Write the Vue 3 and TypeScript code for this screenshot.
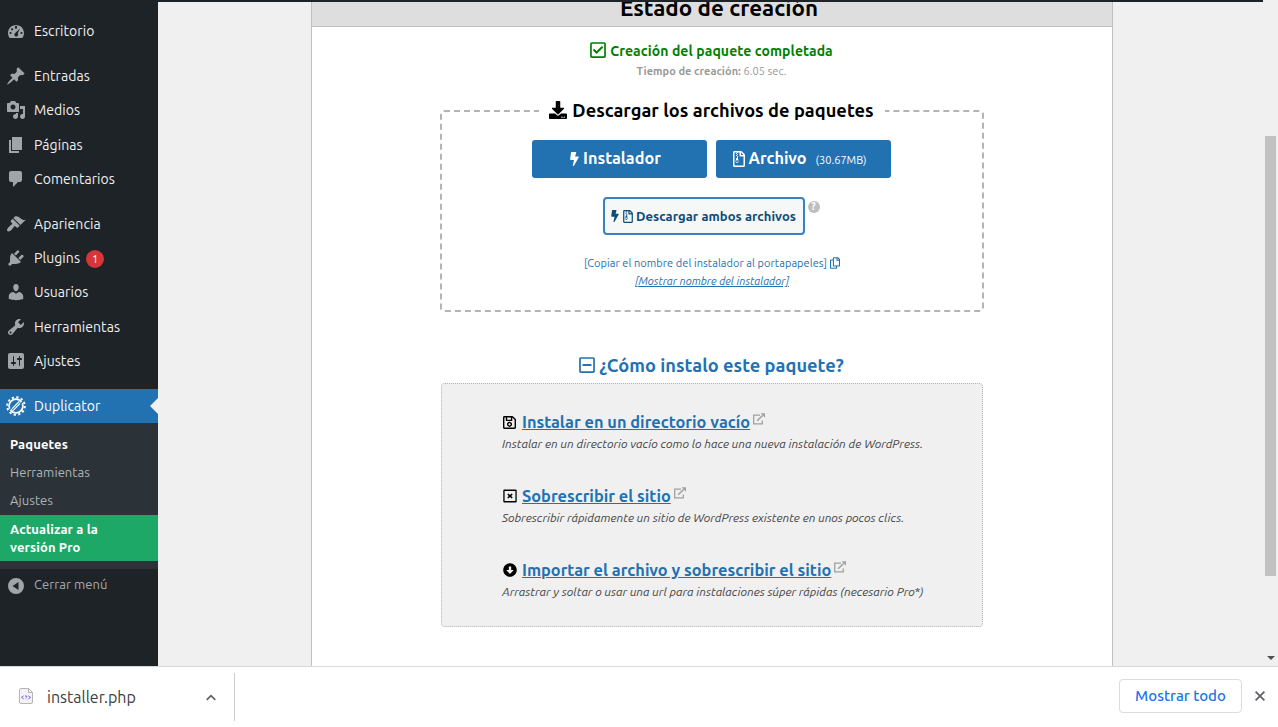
<script setup lang="ts">
interface MenuItem {
  label: string
  icon: string
  gap?: boolean
  badge?: number
}

interface Method {
  title: string
  text: string
  icon: 'save' | 'window' | 'arrow'
}

const menu: MenuItem[] = [
  { label: 'Escritorio', icon: 'M3.76 17h12.48c1.1-1.37 1.76-3.11 1.76-5 0-4.42-3.58-8-8-8s-8 3.58-8 8c0 1.89.66 3.63 1.76 5zM9 6.200a1.100 1.100 0 1 0 2 0 1.100 1.100 0 1 0-2 0zM5 8.300a1.100 1.100 0 1 0 2.200 0 1.100 1.100 0 1 0-2.200 0zM3.400 12a1.100 1.100 0 1 0 2.200 0 1.100 1.100 0 1 0-2.200 0zM14.400 12a1.100 1.100 0 1 0 2.200 0 1.100 1.100 0 1 0-2.200 0zM13.900 7.400l-2.100 5.200c.6.900.4 2-.4 2.600-.9.600-2.100.400-2.700-.5-.6-.9-.3-2.100.6-2.600z' },
  { label: 'Entradas', gap: true, icon: 'M10.44 3.02l1.82-1.82 6.36 6.35-1.83 1.82c-1.05-.68-2.48-.57-3.41.36l-.75.75c-.92.93-1.04 2.35-.35 3.41l-1.83 1.82-2.41-2.41-2.8 2.79c-.42.42-3.38 2.71-3.8 2.29s1.86-3.39 2.28-3.81l2.79-2.79L4.1 9.36l1.83-1.82c1.05.69 2.48.57 3.4-.36l.75-.75c.93-.92 1.05-2.35.36-3.41z' },
  { label: 'Medios', icon: 'M13 11V4c0-.55-.45-1-1-1h-1.67L9 1H5L3.67 3H2c-.55 0-1 .45-1 1v7c0 .55.45 1 1 1h10c.55 0 1-.45 1-1zM7 4.5c1.38 0 2.5 1.12 2.5 2.5S8.38 9.5 7 9.5 4.5 8.38 4.5 7 5.62 4.5 7 4.500zM14 6h5v10.5c0 1.38-1.12 2.5-2.5 2.5S14 17.88 14 16.5s1.12-2.5 2.5-2.5c.17 0 .34.02.5.05V9h-3V6zm-4 8.05V13h2v3.5c0 1.38-1.12 2.5-2.5 2.5S7 17.88 7 16.5 8.12 14 9.5 14c.17 0 .34.02.5.05z' },
  { label: 'Páginas', icon: 'M6 15V2h10v13H6zm-1 1h8v2H3V5h2v11z' },
  { label: 'Comentarios', icon: 'M5 2h9c1.1 0 2 .9 2 2v7c0 1.1-.9 2-2 2h-2l-5 5v-5H5c-1.1 0-2-.9-2-2V4c0-1.1.9-2 2-2z' },
  { label: 'Apariencia', gap: true, icon: 'M14.48 11.06L7.41 3.99l1.5-1.5c.5-.56 2.3-.47 3.51.32 1.21.8 1.43 1.28 2.91 2.1 1.18.64 2.45 1.26 4.45.85zm-.71.71L6.7 4.7 4.93 6.47c-.39.39-.39 1.02 0 1.41l1.06 1.06c.39.39.39 1.03 0 1.42-.6.6-1.43 1.11-2.21 1.69-.35.26-.7.53-1.01.84C1.43 14.23.4 16.08 1.4 17.07c.99 1 2.84-.03 4.18-1.36.31-.31.58-.66.85-1.02.57-.78 1.08-1.61 1.69-2.21.39-.39 1.02-.39 1.41 0l1.06 1.06c.39.39 1.02.39 1.41 0z' },
  { label: 'Plugins', badge: 1, icon: 'M13.11 4.36L9.87 7.6 8 5.73l3.24-3.24c.35-.34 1.05-.2 1.56.32.52.51.66 1.21.31 1.55zm-8 1.77l.91-1.12 9.01 9.01-1.19.84c-.71.71-2.63 1.16-3.82 1.16H6.14L4.9 17.26c-.59.59-1.54.59-2.12 0-.59-.58-.59-1.53 0-2.12l1.24-1.24v-3.88c0-1.13.4-3.19 1.09-3.89zm7.26 3.97l3.24-3.24c.34-.35 1.04-.21 1.55.31.52.51.66 1.21.31 1.55l-3.24 3.25z' },
  { label: 'Usuarios', icon: 'M10 9.25c-2.27 0-2.73-3.44-2.73-3.44C7 4.02 7.82 2 9.97 2c2.16 0 2.98 2.02 2.71 3.81 0 0-.41 3.44-2.68 3.44zm0 2.57L12.72 10c2.39 0 4.52 2.33 4.52 4.53v2.49s-3.65 1.13-7.24 1.13c-3.65 0-7.24-1.13-7.24-1.13v-2.49c0-2.25 1.94-4.48 4.47-4.48z' },
  { label: 'Herramientas', icon: 'M16.68 9.77c-1.34 1.34-3.3 1.67-4.95.99l-5.41 6.52c-.99.99-2.59.99-3.58 0s-.99-2.59 0-3.57l6.52-5.42c-.68-1.65-.35-3.61.99-4.95 1.28-1.28 3.12-1.62 4.72-1.06l-2.89 2.89 2.82 2.82 2.86-2.87c.53 1.58.18 3.39-1.08 4.65zM3.81 16.21c.4.39 1.04.39 1.43 0 .4-.4.4-1.04 0-1.43-.39-.4-1.03-.4-1.43 0-.39.39-.39 1.03 0 1.43z' },
  { label: 'Ajustes', icon: 'M18 16V4c0-1.100-.9-2-2-2H4c-1.100 0-2 .9-2 2v12c0 1.100.9 2 2 2h12c1.100 0 2-.9 2-2zM8 11h1c.55 0 1 .45 1 1s-.45 1-1 1H8v1.500c0 .28-.22.5-.5.5s-.5-.22-.5-.5V13H6c-.55 0-1-.45-1-1s.45-1 1-1h1V5.500c0-.28.22-.5.5-.5s.5.22.5.5V11zm5-2h-1c-.55 0-1-.45-1-1s.45-1 1-1h1V5.500c0-.28.22-.5.5-.5s.5.22.5.5V7h1c.55 0 1 .45 1 1s-.45 1-1 1h-1v5.500c0 .28-.22.5-.5.5s-.5-.22-.5-.5V9z' },
]

const methods: Method[] = [
  { title: 'Instalar en un directorio vacío', text: 'Instalar en un directorio vacío como lo hace una nueva instalación de WordPress.', icon: 'save' },
  { title: 'Sobrescribir el sitio', text: 'Sobrescribir rápidamente un sitio de WordPress existente en unos pocos clics.', icon: 'window' },
  { title: 'Importar el archivo y sobrescribir el sitio', text: 'Arrastrar y soltar o usar una url para instalaciones súper rápidas (necesario Pro*)', icon: 'arrow' },
]

const bolt = 'M296 160H180.600l42.600-129.800C227.200 15 215.700 0 200 0H56C44 0 33.800 8.900 32.200 20.800l-32 240C-1.700 275.200 9.500 288 24 288h118.700L96.600 482.500c-3.600 15.200 8 29.500 23.300 29.500 8.400 0 16.400-4.400 20.800-12l176-304c9.300-15.900-2.200-36-20.700-36z'
const archive = 'M369.9 97.9L286 14C277 5 264.8 0 252.1 0H48C21.500 0 0 21.500 0 48v416c0 26.500 21.500 48 48 48h288c26.500 0 48-21.500 48-48V131.900c0-12.700-5.100-25-14.100-34zM256 51.900l76.100 76.100H256zM336 464H48V48h80v16h32V48h48v104c0 13.300 10.700 24 24 24h104zM128 64H96v32h32zM160 96h-32v32h32zM128 128H96v32h32zM160 160h-32v32h32zM128 192v32h-24l-20 98c-6 32 18 62 46 62s50-30 44-62l-16-90c-1-5-4-8-9-8h11v-32zm1 104c18 0 32 12 32 28s-14 28-32 28-32-12-32-28 14-28 32-28z'
</script>

<template>
  <div class="page">
    <div class="view">
      <nav class="side">
        <div v-for="item in menu" :key="item.label" class="item" :class="{ gap: item.gap }">
          <svg class="dash" viewBox="0 0 20 20"><path :d="item.icon" fill-rule="evenodd" /></svg>
          <span>{{ item.label }}</span>
          <span v-if="item.badge" class="badge">{{ item.badge }}</span>
        </div>
        <div class="item gap current">
          <svg class="dash" viewBox="0 0 20 20">
            <circle cx="10" cy="10" r="6.900" class="ring" />
            <circle cx="10" cy="10" r="8.800" class="teeth" />
            <path d="M5.200 13.600L13.300 5.500M6.700 14.900L14.900 6.700" class="bars" />
            <path d="M2.500 14.900L5.600 11.800M14.300 8.300L17.500 5" class="cuts" />
          </svg>
          <span>Duplicator</span>
        </div>
        <div class="sub">
          <div class="subitem on">Paquetes</div>
          <div class="subitem">Herramientas</div>
          <div class="subitem">Ajustes</div>
          <div class="upgrade">Actualizar a la<br>versión Pro</div>
        </div>
        <div class="item collapse">
          <svg class="dash" viewBox="0 0 20 20"><path fill-rule="evenodd" d="M10 2a8 8 0 1 0 0 16 8 8 0 0 0 0-16zM12.500 6v8L6.500 10z" /></svg>
          <span>Cerrar menú</span>
        </div>
      </nav>

      <main class="main">
        <section class="panel">
          <header class="head"><h2>Estado de creación</h2></header>
          <div class="done">
            <svg viewBox="0 0 448 512"><path d="M400 32H48C21.490 32 0 53.490 0 80v352c0 26.510 21.490 48 48 48h352c26.510 0 48-21.490 48-48V80c0-26.510-21.490-48-48-48zm0 400H48V80h352v352zm-35.864-241.724L191.547 361.480c-4.705 4.667-12.303 4.637-16.970-.068l-90.781-91.516c-4.667-4.705-4.637-12.303.069-16.971l22.719-22.536c4.705-4.667 12.303-4.637 16.970.069l59.792 60.277 141.352-140.216c4.705-4.667 12.303-4.637 16.970.068l22.536 22.718c4.667 4.706 4.637 12.304-.068 16.971z" /></svg>
            <span>Creación del paquete completada</span>
          </div>
          <div class="time"><b>Tiempo de creación:</b> 6.05 sec.</div>

          <fieldset class="files">
            <legend>
              <svg viewBox="0 0 512 512"><path d="M216 0h80c13.300 0 24 10.700 24 24v168h87.700c17.800 0 26.700 21.500 14.100 34.100L269.700 378.300c-7.500 7.500-19.800 7.500-27.300 0L90.100 226.100c-12.600-12.600-3.700-34.100 14.100-34.100H192V24c0-13.300 10.700-24 24-24zm296 376v112c0 13.300-10.700 24-24 24H24c-13.300 0-24-10.700-24-24V376c0-13.300 10.700-24 24-24h146.700l49 49c20.100 20.100 52.500 20.100 72.600 0l49-49H488c13.300 0 24 10.700 24 24zm-124 88c0-11-9-20-20-20s-20 9-20 20 9 20 20 20 20-9 20-20zm64 0c0-11-9-20-20-20s-20 9-20 20 9 20 20 20 20-9 20-20z" /></svg>
              <span>Descargar los archivos de paquetes</span>
            </legend>
            <div class="primary">
              <button class="btn">
                <svg class="bolt" viewBox="0 0 320 512"><path :d="bolt" /></svg>
                <span>Instalador</span>
              </button>
              <button class="btn">
                <svg class="zip" viewBox="0 0 384 512"><path :d="archive" fill-rule="evenodd" /></svg>
                <span>Archivo</span>
                <small>(30.67MB)</small>
              </button>
            </div>
            <div class="both">
              <button class="btn2">
                <svg class="bolt" viewBox="0 0 320 512"><path :d="bolt" /></svg>
                <svg class="zip" viewBox="0 0 384 512"><path :d="archive" fill-rule="evenodd" /></svg>
                <span>Descargar ambos archivos</span>
              </button>
              <span class="help">?</span>
            </div>
            <div class="copy">
              <span>[Copiar el nombre del instalador al portapapeles]</span>
              <svg viewBox="0 0 448 512"><path d="M433.941 65.941l-51.882-51.882A48 48 0 0 0 348.118 0H176c-26.510 0-48 21.490-48 48v48H48c-26.510 0-48 21.490-48 48v320c0 26.510 21.490 48 48 48h224c26.510 0 48-21.490 48-48v-48h80c26.510 0 48-21.490 48-48V99.882a48 48 0 0 0-14.059-33.941zM266 464H54a6 6 0 0 1-6-6V150a6 6 0 0 1 6-6h74v224c0 26.510 21.490 48 48 48h96v42a6 6 0 0 1-6 6zm128-96H182a6 6 0 0 1-6-6V54a6 6 0 0 1 6-6h106v88c0 13.255 10.745 24 24 24h88v202a6 6 0 0 1-6 6zm6-256h-64V48h9.632c1.591 0 3.117.632 4.243 1.757l48.368 48.368a6 6 0 0 1 1.757 4.243V112z" /></svg>
            </div>
            <div class="show">[Mostrar nombre del instalador]</div>
          </fieldset>

          <div class="how">
            <svg viewBox="0 0 448 512"><path d="M108 284c-6.600 0-12-5.400-12-12v-32c0-6.600 5.400-12 12-12h232c6.600 0 12 5.400 12 12v32c0 6.600-5.400 12-12 12H108zM448 80v352c0 26.500-21.500 48-48 48H48c-26.500 0-48-21.500-48-48V80c0-26.500 21.500-48 48-48h352c26.500 0 48 21.500 48 48zm-48 346V86c0-3.300-2.700-6-6-6H54c-3.300 0-6 2.700-6 6v340c0 3.300 2.700 6 6 6h340c3.300 0 6-2.700 6-6z" /></svg>
            <span>¿Cómo instalo este paquete?</span>
          </div>
          <div class="methods">
            <div v-for="m in methods" :key="m.title" class="method">
              <div class="mtitle">
                <span class="mic">
                  <svg v-if="m.icon === 'save'" width="13" height="15" viewBox="0 0 448 512"><path d="M433.941 129.941l-83.882-83.882A48 48 0 0 0 316.118 32H48C21.490 32 0 53.490 0 80v352c0 26.510 21.490 48 48 48h352c26.510 0 48-21.490 48-48V163.882a48 48 0 0 0-14.059-33.941zM272 80v80H144V80h128zm122 352H54a6 6 0 0 1-6-6V86a6 6 0 0 1 6-6h42v104c0 13.255 10.745 24 24 24h176c13.255 0 24-10.745 24-24V83.882l78.243 78.243a6 6 0 0 1 1.757 4.243V426a6 6 0 0 1-6 6zM224 232c-48.523 0-88 39.477-88 88s39.477 88 88 88 88-39.477 88-88-39.477-88-88-88zm0 128c-22.056 0-40-17.944-40-40s17.944-40 40-40 40 17.944 40 40-17.944 40-40 40z" /></svg>
                  <svg v-else-if="m.icon === 'window'" width="14" height="14" viewBox="0 0 14 14"><path d="M1.300 .6h11.400q1 0 1 1v10.800q0 1-1 1H1.300q-1 0-1-1V1.600q0-1 1-1zM1.600 1.900v10.200h10.800V1.900zM4.300 5.600l1.100-1.100L7 6l1.600-1.500 1.100 1.100L8.200 7l1.500 1.400-1.100 1.100L7 8 5.400 9.500 4.300 8.400 5.800 7z" fill-rule="evenodd" /></svg>
                  <svg v-else width="14" height="14" viewBox="0 0 512 512"><path d="M504 256c0 137-111 248-248 248S8 393 8 256 119 8 256 8s248 111 248 248zM212 140v116h-70.900c-10.700 0-16.100 13-8.500 20.500l114.900 114.300c4.700 4.700 12.200 4.700 16.900 0l114.900-114.300c7.600-7.600 2.200-20.500-8.500-20.500H300V140c0-6.600-5.400-12-12-12h-64c-6.600 0-12 5.400-12 12z" fill-rule="evenodd" /></svg>
                </span>
                <a>{{ m.title }}</a>
                <svg class="ext" width="12" height="12" viewBox="0 0 12 12">
                  <path d="M7 2.200H.7v8.600h8.600V7.500" fill="none" stroke="currentColor" stroke-width="1.300" />
                  <path d="M4.200 7.700L9.500 2.500" stroke="currentColor" stroke-width="1.600" />
                  <path d="M7.600 .3H12v4.400z" />
                </svg>
              </div>
              <p>{{ m.text }}</p>
            </div>
          </div>
        </section>
      </main>
      <div class="scroll"><div class="thumb"></div><div class="down"></div></div>
    </div>

    <footer class="shelf">
      <div class="download">
        <svg class="doc" width="14" height="16" viewBox="0 0 14 16">
          <path d="M2 .5h7.500l4 4V14a1.500 1.500 0 0 1-1.500 1.500H2A1.500 1.500 0 0 1 .5 14V2A1.500 1.500 0 0 1 2 .5z" fill="#f3f2f5" stroke="#b5b5b5" />
          <path d="M9.500 .5v4h4z" fill="#fff" stroke="#b5b5b5" />
          <path d="M4.600 7.900L2.500 9.400l2.100 1.500M9.400 7.900l2.100 1.500-2.100 1.500M6 8.200q1-.7 1.800 0 .2.800-.8 1.300v.4M7 10.600v.7" fill="none" stroke="#7d5be0" stroke-width="1" />
        </svg>
        <span class="fname">installer.php</span>
        <svg class="chev" width="10" height="7" viewBox="0 0 10 7"><path d="M.7 5.900L5 1.600l4.300 4.300" fill="none" stroke="#5f6368" stroke-width="1.700" /></svg>
      </div>
      <button class="all"><span>Mostrar todo</span></button>
      <svg class="close" width="10" height="10" viewBox="0 0 10 10"><path d="M.6 .6l8.800 8.800M9.400 .6L.6 9.400" stroke="#5f6368" stroke-width="1.800" /></svg>
    </footer>
  </div>
</template>

<style>
body { background: #fff; }
</style>

<style scoped>
.page { width: 1278px; height: 727px; overflow: hidden; display: flex; flex-direction: column; font-family: Ubuntu, "Noto Sans", sans-serif; font-size: 14px; background: #fff; }
.page * { box-sizing: border-box; }
svg { display: block; flex: none; fill: currentColor; }
button { font-family: inherit; margin: 0; padding: 0; border: 0; }
.view { display: flex; height: 666px; flex: none; overflow: hidden; }

.side { width: 158px; flex: none; background: #1d2327; color: #f0f0f1; padding-top: 14px; }
.item { display: flex; align-items: center; height: 34.200px; padding-left: 6px; line-height: 18px; letter-spacing: .07px; white-space: nowrap; }
.item.gap { margin-top: 11px; }
.dash { width: 20px; height: 20px; margin-right: 8px; color: #a0a5aa; }
.badge { width: 18px; height: 18px; margin: 1px 0 0 6px; border-radius: 9px; background: #d63638; color: #fff; font-size: 11px; line-height: 18px; text-align: center; }
.current { background: #2271b1; color: #fff; }
.current::after { content: ""; margin-left: auto; border: 8px solid transparent; border-left-width: 0; border-right-color: #f0f0f1; }
.current .dash { color: #fff; }
.ring { fill: none; stroke: #fff; stroke-width: 1.700; }
.teeth { fill: none; stroke: #fff; stroke-width: 2; stroke-dasharray: 2.300 2.307; }
.bars { stroke: #fff; stroke-width: 1.200; fill: none; }
.cuts { stroke: #2271b1; stroke-width: 1.300; fill: none; }
.sub { background: #2c3338; height: 146px; padding-top: 8px; font-size: 13px; color: #b0b4b8; letter-spacing: .07px; }
.subitem { height: 28px; line-height: 27px; padding-left: 10px; }
.subitem.on { color: #fff; font-weight: 700; letter-spacing: .12px; }
.upgrade { height: 46px; background: #1da867; color: #fff; font-weight: 700; line-height: 18px; padding: 5px 10px; letter-spacing: .12px; }
.collapse { color: #a7aaad; height: 30px; font-size: 13px; letter-spacing: .07px; }
.collapse .dash { margin-top: 4px; }

.main { flex: 1; background: #f0f0f0; border-top: 2px solid #1d2327; display: flex; }
.panel { width: 802px; height: 670px; margin-left: 153px; border: solid #bfbfbf; border-width: 0 1px; background: #fff; display: flex; flex-direction: column; align-items: center; }
.head { width: 100%; height: 25px; background: #dedede; border-bottom: 1px solid #bfbfbf; overflow: hidden; text-align: center; flex: none; }
.head h2 { margin: 0; padding-left: 14px; font-size: 22.400px; font-weight: 700; line-height: 11px; color: #000; }
.done { display: flex; align-items: center; gap: 4px; height: 20px; margin-top: 14px; color: #008000; font-weight: 700; line-height: 20px; letter-spacing: .085px; padding-right: 1px; }
.done svg { width: 16px; height: 18px; margin-top: -2px; }
.time { height: 16px; margin-top: 2px; font-size: 11px; line-height: 16px; color: #999; letter-spacing: .04px; padding-right: 1px; }

.files { width: 544px; height: 213px; margin: 20px 0 0; padding: 0; border: 2px dashed #b4b4b4; border-radius: 4px; text-align: center; flex: none; min-width: 0; }
.files legend { display: flex; align-items: center; gap: 5px; margin: 0 auto; padding: 0 11px 0 10px; height: 24px; font-size: 18.200px; font-weight: 700; line-height: 22px; letter-spacing: .04px; color: #000; }
.files legend span { margin-top: -2px; }
.files legend svg { width: 18px; height: 18px; margin-top: -2px; }
.primary { display: flex; justify-content: center; gap: 9px; margin-top: 17px; padding-right: 1px; }
.btn { width: 175px; height: 38px; display: flex; align-items: center; justify-content: center; background: #2271b1; color: #fff; border-radius: 3px; font-size: 16.250px; font-weight: 700; padding-right: 8px; }
.btn + .btn { padding-right: 0; }
.btn span { margin-top: -2px; line-height: 22px; }
.btn .bolt { width: 9px; height: 14px; margin-right: 4px; }
.btn .zip { width: 12px; height: 16px; margin: -1px 4px 0 -1px; }
.btn small { font-size: 11px; font-weight: 400; margin: 2px 7px 0 9px; }
.both { display: flex; justify-content: center; align-items: flex-start; margin-top: 19px; padding-right: 2px; gap: 3px; }
.btn2 { width: 202px; height: 38px; display: flex; align-items: center; justify-content: center; background: #f6f7f7; border: 2px solid #3582c4; border-radius: 4px; color: #0a4b78; font-size: 13px; font-weight: 700; letter-spacing: .07px; }
.btn2 .bolt { width: 8px; height: 12px; margin-right: 4px; }
.btn2 .zip { width: 10px; height: 13px; margin-right: 3px; }
.help { width: 12px; height: 12px; margin-top: 4px; border-radius: 6px; background: #bfbfbf; color: #fff; font-size: 10px; font-weight: 700; line-height: 12px; }
.copy { display: flex; justify-content: center; align-items: center; gap: 3px; height: 18px; margin-top: 19px; font-size: 11px; letter-spacing: .06px; color: #2271b1; }
.copy svg { width: 10px; height: 12px; }
.show { height: 18px; line-height: 18px; font-size: 11px; font-style: italic; color: #2271b1; text-decoration: underline; }

.how { display: flex; align-items: center; gap: 4px; height: 24px; margin-top: 41px; padding-right: 1px; color: #2271b1; font-size: 18.200px; font-weight: 700; line-height: 24px; letter-spacing: .04px; }
.how svg { width: 16px; height: 18px; }
.methods { width: 542px; height: 244px; margin-top: 6px; padding: 27px 0 0 60px; background: #f0f0f0; border: 1px dotted #b4b4b4; border-radius: 4px; flex: none; }
.method { height: 74px; }
.mtitle { display: flex; align-items: center; height: 22px; font-size: 16.350px; font-weight: 700; line-height: 22px; color: #2271b1; }
.mtitle a { text-decoration: underline; }
.mic { width: 20px; padding-left: 1px; color: #000; }
.ext { color: #a0a0a0; margin: -7px 0 0 3px; }
.method p { margin: 1px 0 0; font-size: 12px; line-height: 19px; font-style: italic; color: #444; white-space: nowrap; }

.scroll { width: 15px; flex: none; background: #f0f0f1; display: flex; flex-direction: column; padding: 136px 2px 6px; justify-content: space-between; align-items: center; }
.thumb { width: 11px; height: 440px; background: #c1c1c1; }
.down { border: 4px solid transparent; border-top-color: #505050; border-bottom-width: 0; }

.shelf { height: 61px; flex: none; border-top: 1px solid #d8d9dc; display: flex; align-items: center; background: #fff; }
.download { width: 235px; height: 48px; border-right: 1px solid #ccc; display: flex; align-items: center; padding-left: 19px; }
.doc { margin-top: -2px; }
.fname { margin-left: 14px; font-size: 16px; color: #3c4043; }
.chev { margin: 0 18px 0 auto; }
.all { display: flex; justify-content: center; width: 123px; height: 34px; margin-left: auto; border: 1px solid #dadce0; border-radius: 4px; background: #fff; color: #1a73e8; font-size: 15px; font-weight: 500; line-height: 32px; margin-bottom: 2px; }
.close { margin: 0 13px 2px; }
</style>
